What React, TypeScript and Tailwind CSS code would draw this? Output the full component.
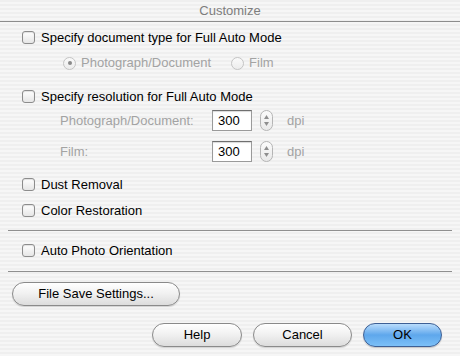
import React from "react";

const Checkbox = () => (
  <span className="w-[13px] h-[13px] shrink-0 rounded-[3px] border border-[#8c8c8c] bg-gradient-to-b from-[#ffffff] to-[#e6e6e6] shadow-[inset_0_1px_1px_rgba(0,0,0,0.12)]" />
);

const Radio = ({ on }: { on?: boolean }) => (
  <span className="w-[13px] h-[13px] shrink-0 rounded-full border border-[#c4c4c4] bg-gradient-to-b from-[#fafafa] to-[#ececec] flex items-center justify-center">
    {on && <span className="w-[4px] h-[4px] rounded-full bg-[#8a8a8a]" />}
  </span>
);

const CheckRow = ({ label, className }: { label: string; className: string }) => (
  <div className={`flex items-center h-[20px] pl-[22px] gap-[6px] ${className}`}>
    <Checkbox />
    <span className="text-[13px] text-black leading-none">{label}</span>
  </div>
);

const Stepper = () => (
  <span className="w-[13px] h-[21px] rounded-full border border-[#b5b5b5] bg-gradient-to-b from-[#fbfbfb] to-[#e9e9e9] flex flex-col items-center justify-center gap-[3px]">
    <svg width="5" height="4" viewBox="0 0 5 4"><path d="M2.5 0L5 4H0z" fill="#8e8e8e" /></svg>
    <svg width="5" height="4" viewBox="0 0 5 4"><path d="M0 0h5L2.5 4z" fill="#8e8e8e" /></svg>
  </span>
);

const ResRow = ({ label, className }: { label: string; className: string }) => (
  <div className={`flex items-center h-[21px] ${className}`}>
    <span className="w-[212px] shrink-0 pl-[60px] text-[13px] text-[#a3a3a3]">{label}</span>
    <span className="w-[40px] h-[21px] bg-white border border-[#9a9a9a] border-t-[#6f6f6f] shadow-[inset_0_1px_1px_rgba(0,0,0,0.15)] flex items-center pl-[5px] text-[13px] text-black">
      300
    </span>
    <span className="ml-[8px]"><Stepper /></span>
    <span className="ml-[14px] text-[13px] text-[#a3a3a3]">dpi</span>
  </div>
);

const Button = ({ label, className }: { label: string; className: string }) => (
  <button
    className={`h-[24px] rounded-full border border-[#8a8a8a] bg-gradient-to-b from-[#ffffff] via-[#f0f0f0] to-[#dcdcdc] shadow-[0_1px_1px_rgba(0,0,0,0.15)] text-[13px] text-black flex items-center justify-center ${className}`}
  >
    {label}
  </button>
);

export default function App() {
  return (
    <div
      className="w-[460px] h-[356px] overflow-hidden flex flex-col bg-[repeating-linear-gradient(180deg,#efefef_0px,#efefef_2px,#f6f6f6_2px,#f6f6f6_4px)]"
      style={{ fontFamily: '"Liberation Sans", Arial, sans-serif' }}
    >
      <div className="h-[22px] shrink-0 border-b border-[#8d8d8d] flex items-center justify-center text-[13px] text-[#7d7d7d]">
        Customize
      </div>

      <CheckRow label="Specify document type for Full Auto Mode" className="mt-[5px]" />

      <div className="flex items-center h-[20px] mt-[6px] text-[13px] text-[#a3a3a3]">
        <span className="ml-[63px]"><Radio on /></span>
        <span className="ml-[5px]">Photograph/Document</span>
        <span className="ml-[20px]"><Radio /></span>
        <span className="ml-[5px]">Film</span>
      </div>

      <CheckRow label="Specify resolution for Full Auto Mode" className="mt-[13px]" />

      <ResRow label="Photograph/Document:" className="mt-[4px]" />
      <ResRow label="Film:" className="mt-[10px]" />

      <CheckRow label="Dust Removal" className="mt-[12px]" />
      <CheckRow label="Color Restoration" className="mt-[6px]" />

      <div className="mx-[8px] mt-[10px] h-px bg-[#8f8f8f]" />

      <CheckRow label="Auto Photo Orientation" className="mt-[9px]" />

      <div className="mx-[8px] mt-[11px] h-px bg-[#8f8f8f]" />

      <div className="mt-[10px] pl-[12px] flex">
        <Button label="File Save Settings..." className="w-[168px]" />
      </div>

      <div className="mt-[17px] flex pl-[152px] gap-[11px]">
        <Button label="Help" className="w-[90px]" />
        <Button label="Cancel" className="w-[99px]" />
        <button className="w-[79px] h-[24px] rounded-full border border-[#3d5f94] bg-gradient-to-b from-[#b9dcfb] via-[#5ea7ec] to-[#7cc0f7] shadow-[0_1px_1px_rgba(0,0,0,0.2)] text-[13px] text-black flex items-center justify-center">
          OK
        </button>
      </div>
    </div>
  );
}
